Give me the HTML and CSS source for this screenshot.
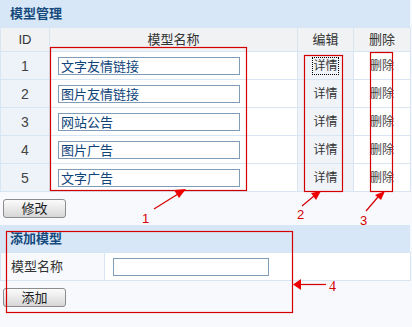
FILE: index.html
```html
<!DOCTYPE html>
<html lang="zh">
<head>
<meta charset="utf-8">
<link rel="stylesheet" href="styles.css">
</head>
<body>
<div class="page">
  <section class="panel">
    <h2 class="bar">模型管理</h2>
    <table class="grid">
      <colgroup><col class="c-id"><col class="c-name"><col class="c-edit"><col class="c-del"></colgroup>
      <thead>
        <tr><th>ID</th><th>模型名称</th><th>编辑</th><th>删除</th></tr>
      </thead>
      <tbody>
        <tr><td class="id">1</td><td class="name"><input class="txt" value="文字友情链接"></td><td class="edit"><a class="lnk focus">详情</a></td><td class="del">删除</td></tr>
        <tr><td class="id">2</td><td class="name"><input class="txt" value="图片友情链接"></td><td class="edit"><a class="lnk">详情</a></td><td class="del">删除</td></tr>
        <tr><td class="id">3</td><td class="name"><input class="txt" value="网站公告"></td><td class="edit"><a class="lnk">详情</a></td><td class="del">删除</td></tr>
        <tr><td class="id">4</td><td class="name"><input class="txt" value="图片广告"></td><td class="edit"><a class="lnk">详情</a></td><td class="del">删除</td></tr>
        <tr><td class="id">5</td><td class="name"><input class="txt" value="文字广告"></td><td class="edit"><a class="lnk">详情</a></td><td class="del">删除</td></tr>
      </tbody>
    </table>
    <div class="actions"><button class="btn">修改</button></div>
  </section>

  <section class="panel add">
    <h2 class="bar">添加模型</h2>
    <table class="grid form">
      <colgroup><col class="c-label"><col class="c-field"></colgroup>
      <tbody>
        <tr><td class="label">模型名称</td><td class="field"><input class="txt short" value=""></td></tr>
      </tbody>
    </table>
    <div class="actions"><button class="btn">添加</button></div>
  </section>

  <svg class="notes" width="412" height="327" viewBox="0 0 412 327">
    <g fill="none" stroke="#d40000" stroke-width="1.2">
      <rect x="50.5" y="47.5" width="196" height="143"/>
      <rect x="304.5" y="55.5" width="38" height="136"/>
      <rect x="370.5" y="52.5" width="22" height="139"/>
      <rect x="6.5" y="231.5" width="286" height="81"/>
      <line x1="154" y1="209" x2="178" y2="194"/>
      <line x1="302" y1="206" x2="314" y2="196"/>
      <line x1="366" y1="211" x2="378" y2="197"/>
      <line x1="300" y1="284.5" x2="326" y2="284.5"/>
    </g>
    <g fill="#ee0000">
      <polygon points="186,189 174,190 179,198"/>
      <polygon points="321,191 311,193 316,200"/>
      <polygon points="385,191 375,195 381,200"/>
      <polygon points="293,284.5 301,279 301,290"/>
    </g>
    <g class="num" fill="#d40000">
      <text x="142" y="223">1</text>
      <text x="297" y="219">2</text>
      <text x="360" y="225">3</text>
      <text x="329" y="291" class="serif">4</text>
    </g>
  </svg>
</div>
</body>
</html>
```

FILE: styles.css
```css
* { box-sizing: border-box; }

body {
  margin: 0;
  background: #f8f9fd;
  font-family: "Liberation Sans", "Noto Sans CJK SC", sans-serif;
  font-size: 12px;
  color: #333;
}

.page {
  position: relative;
  width: 412px;
  height: 327px;
  overflow: hidden;
}

.panel {
  width: 410px;
}

.bar {
  margin: 0;
  height: 27px;
  line-height: 27px;
  padding-left: 10px;
  background: #d7e7f7;
  color: #15497c;
  font-size: 13px;
  font-weight: bold;
}

.grid {
  width: 410px;
  border-collapse: collapse;
  table-layout: fixed;
}

.grid td, .grid th {
  border: 1px solid #d8e5f2;
  padding: 0;
  font-weight: normal;
  line-height: 16px;
}

.grid thead th {
  height: 24px;
  background: #f1f2f3;
  color: #333;
  font-size: 13px;
  text-align: center;
}

.c-id { width: 49px; }
.c-name { width: 248px; }
.c-edit { width: 56px; }
.c-del { width: 57px; }

.grid tbody td { height: 28px; }

.id {
  background: #eef3f9;
  text-align: center;
  color: #444;
  font-size: 14px;
}

.name {
  background: #fff;
  padding-left: 8px !important;
}

.edit {
  background: #f0f4f9;
  text-align: center;
}

.del {
  background: #fff;
  text-align: center;
  color: #444;
}

.lnk {
  color: #333;
  text-decoration: none;
  padding: 1px 0;
}

.focus {
  outline: 1px dotted #000;
}

.txt {
  display: block;
  width: 182px;
  height: 18px;
  border: 1px solid #7f9db9;
  padding: 0 2px;
  font-family: "Liberation Sans", "Noto Sans CJK SC", sans-serif;
  font-size: 13px;
  color: #0f4479;
  background: #fff;
}

.txt.short {
  width: 156px;
}

.actions {
  padding: 7px 0 7px 3px;
}

.btn {
  display: block;
  width: 63px;
  height: 19px;
  padding: 0;
  border: 1px solid #8c8c8c;
  border-radius: 3px;
  background: linear-gradient(#fbfbfb, #e6e6e6 60%, #d6d6d6);
  font-family: "Liberation Sans", "Noto Sans CJK SC", sans-serif;
  font-size: 13px;
  line-height: 16px;
  color: #222;
}

.form td { height: 28px; }

.c-label { width: 104px; }
.c-field { width: 306px; }

.label {
  background: #f7f9fc;
  padding-left: 10px !important;
  font-size: 13px;
  color: #333;
}

.field {
  background: #fff;
  padding-left: 8px !important;
}

.notes {
  position: absolute;
  left: 0;
  top: 0;
  pointer-events: none;
}

.num text {
  font-family: "Liberation Sans", sans-serif;
  font-size: 13px;
}

.num text.serif {
  font-family: "Liberation Serif", serif;
  font-size: 14px;
}
```
